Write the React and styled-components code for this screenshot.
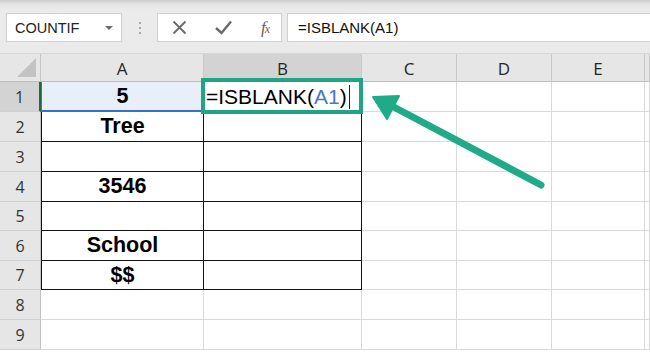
import React from 'react';
import styled, { createGlobalStyle } from 'styled-components';

const GlobalStyle = createGlobalStyle`
  html, body {
    margin: 0;
    padding: 0;
    background: #ffffff;
  }
  body {
    font-family: 'Liberation Sans', Arial, sans-serif;
  }
`;

const Window = styled.div`
  position: relative;
  width: 650px;
  height: 352px;
  overflow: hidden;
  background: #ffffff;
`;

const Toolbar = styled.div`
  height: 54px;
  box-sizing: border-box;
  padding: 13px 0 0 6px;
  display: flex;
  align-items: flex-start;
  background: linear-gradient(#cdcdcd 0px, #e4e4e4 4px, #ebebeb 10px, #eaeaea 100%);
  border-bottom: 1px solid #d6d6d6;
`;

const Box = styled.div`
  height: 29px;
  box-sizing: border-box;
  background: #ffffff;
  border: 1px solid #d0d0d0;
  display: flex;
  align-items: center;
`;

const NameBox = styled(Box)`
  width: 116px;
  padding: 0 8px 0 8px;
  justify-content: space-between;
  font-size: 14.5px;
  color: #222;
`;

const Caret = styled.span`
  width: 0;
  height: 0;
  border-left: 4px solid transparent;
  border-right: 4px solid transparent;
  border-top: 4px solid #6a6a6a;
  margin-top: 1px;
`;

const Dots = styled.div`
  width: 35px;
  height: 29px;
  display: flex;
  flex-direction: column;
  align-items: center;
  justify-content: center;
  gap: 3px;

  span {
    width: 2px;
    height: 2px;
    background: #a9a9a9;
  }
`;

const ButtonsBox = styled(Box)`
  width: 125px;
  justify-content: space-between;
  padding: 0 12px 0 14px;
  color: #6b6b6b;
`;

const FxLabel = styled.span`
  font-family: 'Liberation Serif', 'Times New Roman', serif;
  font-style: italic;
  font-size: 17px;
  color: #5f5f5f;
  letter-spacing: -1px;

  small {
    font-size: 12px;
  }
`;

const FormulaBox = styled(Box)`
  flex: 1;
  margin-left: 5px;
  padding-left: 10px;
  border-right: none;
  font-size: 15px;
  color: #111;
`;

const Sheet = styled.div`
  display: grid;
  grid-template-columns: 41px 163px 158px 95px 95px 93px 1fr;
  grid-template-rows: 28px 30px 30px 30px 30px 29px 30px 29px 30px 30px;
`;

const Corner = styled.div`
  position: relative;
  background: #e6e6e6;
  border-right: 1px solid #c6c6c6;
  border-bottom: 1px solid #bdbdbd;
  box-sizing: border-box;

  &::after {
    content: '';
    position: absolute;
    right: 4px;
    bottom: 4px;
    width: 0;
    height: 0;
    border-left: 19px solid transparent;
    border-bottom: 19px solid #c3c3c3;
  }
`;

const ColHeader = styled.div`
  box-sizing: border-box;
  display: flex;
  align-items: center;
  justify-content: center;
  padding-top: 2px;
  background: ${(p) => (p.$active ? '#d3d3d3' : '#e6e6e6')};
  border-right: 1px solid #c9c9c9;
  border-bottom: 1px solid #bdbdbd;
  font-family: 'Open Sans', 'Liberation Sans', sans-serif;
  font-size: 17px;
  color: #262626;
`;

const RowHeader = styled.div`
  box-sizing: border-box;
  display: flex;
  align-items: center;
  justify-content: center;
  background: ${(p) => (p.$active ? '#d3d3d3' : '#e6e6e6')};
  border-right: ${(p) => (p.$active ? '2px solid #1e6b41' : '1px solid #c3c3c3')};
  border-bottom: 1px solid #d0d0d0;
  font-family: 'Open Sans', 'Liberation Sans', sans-serif;
  font-size: 16px;
  color: #333;
`;

const Cell = styled.div`
  position: relative;
  box-sizing: border-box;
  display: flex;
  align-items: center;
  justify-content: center;
  border-right: ${(p) => (p.$boxed ? '1.5px solid #111' : '1px solid #dadada')};
  border-bottom: ${(p) => (p.$boxed ? '1.5px solid #111' : '1px solid #dadada')};
  border-left: ${(p) => (p.$leftEdge ? '1px solid #111' : 'none')};
  font-weight: bold;
  font-size: 21.5px;
  color: #000;
`;

const RefCell = styled(Cell)`
  background: #e9eff9;
  border-bottom: 2px solid #3a6fd2;
  border-left: 1px solid #3a6fd2;
`;

const EditCell = styled(Cell)`
  justify-content: flex-start;
  padding-left: 2px;
  font-weight: normal;
  font-size: 21px;
  z-index: 2;

  &::after {
    content: '';
    position: absolute;
    left: -3px;
    top: -4px;
    right: -2px;
    bottom: -3px;
    border: 4px solid #1fa582;
    pointer-events: none;
  }
`;

const Ref = styled.span`
  color: #4a78c8;
`;

const TextCursor = styled.span`
  display: inline-block;
  width: 1px;
  height: 24px;
  background: #222;
  margin-left: 2px;
`;

const ArrowLayer = styled.svg`
  position: absolute;
  left: 0;
  top: 0;
  pointer-events: none;
  z-index: 3;
`;

const columns = ['A', 'B', 'C', 'D', 'E'];
const values = ['5', 'Tree', '', '3546', '', 'School', '$$', '', ''];

const Check = () => (
  <svg width="19" height="17" viewBox="0 0 19 17">
    <path d="M2 9 L7.5 14 L17 2.5" fill="none" stroke="#6b6b6b" strokeWidth="2.4" />
  </svg>
);

const Cross = () => (
  <svg width="15" height="15" viewBox="0 0 15 15">
    <path d="M1.5 1.5 L13.5 13.5 M13.5 1.5 L1.5 13.5" stroke="#6b6b6b" strokeWidth="1.9" />
  </svg>
);

const App = () => (
  <Window>
    <GlobalStyle />
    <Toolbar>
      <NameBox>
        COUNTIF
        <Caret />
      </NameBox>
      <Dots>
        <span />
        <span />
        <span />
      </Dots>
      <ButtonsBox>
        <Cross />
        <Check />
        <FxLabel>
          f<small>x</small>
        </FxLabel>
      </ButtonsBox>
      <FormulaBox>=ISBLANK(A1)</FormulaBox>
    </Toolbar>
    <Sheet>
      <Corner />
      {columns.map((c) => (
        <ColHeader key={c} $active={c === 'B'}>
          {c}
        </ColHeader>
      ))}
      <ColHeader />
      {values.map((v, i) => {
        const row = i + 1;
        const boxed = row <= 7;
        return (
          <React.Fragment key={row}>
            <RowHeader $active={row === 1}>{row}</RowHeader>
            {row === 1 ? (
              <RefCell $boxed>{v}</RefCell>
            ) : (
              <Cell $boxed={boxed} $leftEdge={boxed}>{v}</Cell>
            )}
            {row === 1 ? (
              <EditCell $boxed>
                =ISBLANK(<Ref>A1</Ref>)<TextCursor />
              </EditCell>
            ) : (
              <Cell $boxed={boxed} />
            )}
            <Cell />
            <Cell />
            <Cell />
            <Cell />
          </React.Fragment>
        );
      })}
    </Sheet>
    <ArrowLayer width="650" height="352" viewBox="0 0 650 352">
      <line x1="541" y1="185" x2="390" y2="105" stroke="#1fab88" strokeWidth="7" strokeLinecap="round" />
      <polygon points="373,97 399,96 387,119" fill="#1fab88" stroke="#1fab88" strokeWidth="2" strokeLinejoin="round" />
    </ArrowLayer>
  </Window>
);

export default App;
